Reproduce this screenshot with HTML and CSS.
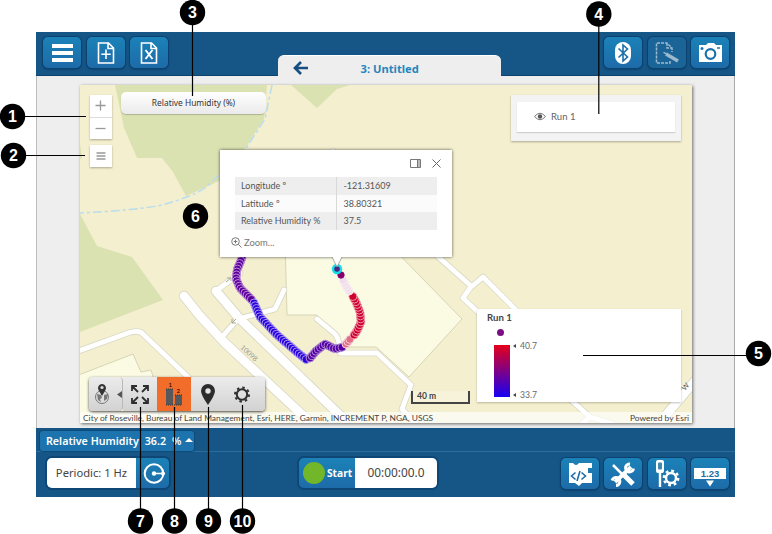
FILE: index.html
```html
<!DOCTYPE html>
<html lang="en">
<head>
    <meta charset="UTF-8">
    <meta name="viewport" content="width=device-width, initial-scale=1.0">
    <title>Map display</title>
    <link rel="stylesheet" href="styles.css">
</head>
<body>
    <div class="app">
        <header class="topbar">
            <div class="group">
                <button class="btn"><svg width="38" height="31" viewBox="0 0 38 31"><path d="M9 7h21v4H9zM9 14h21v4H9zM9 21h21v4H9z" fill="#fff"/></svg></button>
                <button class="btn"><svg width="38" height="31" viewBox="0 0 38 31" fill="none" stroke="#fff" stroke-width="1.6"><path d="M11.500 6h10l5 5v15h-15zM21 6v5.500h5.500M19 12.500v9.500M14.300 17.300h9.400"/></svg></button>
                <button class="btn"><svg width="38" height="31" viewBox="0 0 38 31" fill="none" stroke="#fff" stroke-width="1.6"><path d="M11.500 6h10l5 5v15h-15zM21 6v5.500h5.500"/><path d="M15.500 13l7 9M22.500 13l-7 9" stroke-width="1.900"/></svg></button>
            </div>
            <div class="tab">
                <svg class="back" width="16" height="14" viewBox="0 0 16 14" fill="none" stroke="#164f80" stroke-width="2.700"><path d="M2 7h13M8 1L2 7l6 6"/></svg>
                <span class="tab-title">3: Untitled</span>
            </div>
            <div class="group">
                <button class="btn"><svg width="38" height="31" viewBox="0 0 38 31"><rect x="11" y="5" width="16" height="22" rx="8" fill="#fff"/><path d="M14.500 11.500l9 8.500-4.500 4V8l4.500 4-9 8.500" fill="none" stroke="#1c6ea8" stroke-width="1.600"/></svg></button>
                <button class="btn off"><svg width="38" height="31" viewBox="0 0 38 31" fill="none" stroke="#9db9ce"><path d="M22 24v2H8.500V6H19l5 5v4M19 6v5h5" stroke-dasharray="3 1" stroke-width="1.500"/><path d="M18 17l12 7" stroke-width="3.500"/><path d="M15.500 15.300l3 1.500" stroke-width="1.500"/></svg></button>
                <button class="btn"><svg width="38" height="31" viewBox="0 0 38 31"><path d="M8 8h7l2-2h6l2 2h6v17H8z" fill="#fff"/><circle cx="19.500" cy="17" r="4.800" fill="#fff" stroke="#1c70aa" stroke-width="2.200"/><circle cx="11" cy="11.500" r="1.500" fill="#1c78b0"/><path d="M26 11h3" stroke="#1c78b0" stroke-width="1.500"/></svg></button>
            </div>
        </header>

        <main class="stage">
            <div class="map">
                <svg class="basemap" viewBox="80 85 612 338">
                    <rect x="80" y="85" width="612" height="338" fill="#f4efcf"/>
                    <g fill="#dae2b2">
                        <path d="M115 85H267L264 119L244 150L228 177L186 196L173 172L162 158H137L124 128z"/>
                        <path d="M291 85H350L337 89L317 108z"/>
                        <path d="M80 214L97 246L132 257L163 300L80 332zM80 144L82 158L80 159z"/>
                    </g>
                    <path d="M272 85L265 119L243 153L205 188Q192 197 158 206Q125 211 80 213" fill="none" stroke="#b9dcf0" stroke-width="1.500" stroke-dasharray="9 3 3 3"/>
                    <g fill="#fbfae3" stroke="#d6d5b8" stroke-width="1">
                        <path d="M285 240L287 315H317L340 340L340 347H376L409 377L462 319L385 240z"/>
                        <path d="M76 376L133 354L141 372L151 370L156 385L160 428H76z"/>
                    </g>
                    <g class="road-edge">
                        <path id="minor" d="M76 352L128 333Q140 329 144 335L190 379M221 338L238 319L275 309L284 290M240 273L216 291M317 319L334 333Q339 337 340 350M340 353H377L411 385L402 409L420 428M434 253L471 286M480 314L463 298L470 288L483 277L536 330M560 390L590 417L577 428M590 417L613 424M333 151L330 160"/>
                        <path id="major" d="M184 296L200 316L225 343L310 422M216 291L239 318L345 420M655 428L700 375"/>
                    </g>
                    <g class="road">
                        <use href="#minor"/>
                        <use href="#major"/>
                    </g>
                    <text x="240" y="348" class="block-no" transform="rotate(43 240 348)">10098</text>
                    <text x="685" y="391" class="street-name" transform="rotate(-50 685 391)">W</text>
                    <g stroke="#a5a58c" stroke-width="1" fill="none"><path d="M226 282l5-4m-4 0h4v3M236 319l-4 4m0-4v4h4"/></g>
                    <rect x="80" y="412" width="612" height="11" fill="#fff" opacity=".66"/>
                    <g id="track"></g>
                    <circle cx="337" cy="269" r="4" fill="#4b267e" stroke="#16dde9" stroke-width="2.400"/>
                </svg>

                <div class="zoom-box">
                    <button><svg width="22" height="22" viewBox="0 0 22 22"><path d="M5.500 10.500h10M10.500 5.500v10" stroke="#999" stroke-width="1.300"/></svg></button>
                    <button><svg width="22" height="22" viewBox="0 0 22 22"><path d="M5.500 10.500h10" stroke="#999" stroke-width="1.300"/></svg></button>
                </div>
                <button class="layers"><svg width="22" height="22" viewBox="0 0 22 22"><path d="M6.500 8h9M6.500 11h9M6.500 14h9" stroke="#999" stroke-width="1.300"/></svg></button>
                <div class="measure">Relative Humidity (%)</div>

                <div class="run-list">
                    <div class="run">
                        <svg width="12" height="9" viewBox="0 0 12 9"><path d="M.5 4.500Q6-2 11.500 4.500Q6 11 .5 4.500z" fill="none" stroke="#777"/><circle cx="6" cy="4.500" r="2.200" fill="#555"/></svg>
                        <span>Run 1</span>
                    </div>
                </div>

                <div class="popup">
                    <div class="popup-actions">
                        <svg width="11" height="9" viewBox="0 0 11 9" fill="none" stroke="#777"><path d="M.5.5h10v8H.5zM7.500.5v8M9 1v7"/></svg>
                        <svg width="9" height="9" viewBox="0 0 9 9" fill="none" stroke="#666"><path d="M.5.5l8 8M8.500.5l-8 8"/></svg>
                    </div>
                    <table class="fields">
                        <tr><th>Longitude &ordm;</th><td>-121.31609</td></tr>
                        <tr><th>Latitude &ordm;</th><td>38.80321</td></tr>
                        <tr><th>Relative Humidity %</th><td>37.5</td></tr>
                    </table>
                    <div class="zoom-to">
                        <svg width="11" height="11" viewBox="0 0 11 11" fill="none" stroke="#777"><circle cx="4.500" cy="4.500" r="3.800"/><path d="M7.300 7.300l3.200 3.200M2.700 4.500h3.600M4.500 2.700v3.600"/></svg>
                        <span>Zoom...</span>
                    </div>
                    <svg class="pointer" width="12" height="12" viewBox="0 0 12 12"><path d="M1 0L6 11L11 0z" fill="#fff"/><path d="M1 1L6 11L11 1" fill="none" stroke="#888" stroke-width=".7"/></svg>
                </div>

                <div class="legend">
                    <div class="legend-title">Run 1</div>
                    <div class="legend-dot"></div>
                    <div class="ramp">
                        <div class="ramp-bar"></div>
                        <div class="ramp-labels">
                            <span>40.7</span>
                            <span>33.7</span>
                        </div>
                    </div>
                </div>

                <div class="scale">40 m</div>

                <div class="tools">
                    <button class="tool first"><svg width="34" height="34" viewBox="0 0 34 34"><circle cx="13" cy="20" r="6.500" fill="#ddd" stroke="#777"/><path d="M8 17l4 1 1 3-2 1 1 3-3-2zM15 18l4-1-1 5-3 2z" fill="#777"/><path d="M13 19l-3.500-6a4 4 0 1 1 7 0z" fill="#333"/><circle cx="13" cy="10.500" r="1.600" fill="#ddd"/><path d="M33 14v7l-5-3.500z" fill="#555"/></svg></button>
                    <button class="tool"><svg width="34" height="34" viewBox="0 0 34 34" fill="none" stroke="#2e2e2e" stroke-width="1.800"><path d="M9 14V9h5M9 9l6 6M20 9h5v5M25 9l-6 6M9 21v5h5M9 26l6-6M20 26h5v-5M25 26l-6-6"/></svg></button>
                    <button class="tool on"><svg width="34" height="34" viewBox="0 0 34 34"><path d="M9 12h7v16H9zM18 18h7v10h-7z" fill="#57585c"/><path d="M9 12h7M18 18h7M9 28h16" stroke="#333" stroke-dasharray="1 1"/><text x="11.500" y="10" font-size="6">1</text><text x="19.500" y="16" font-size="6">2</text></svg></button>
                    <button class="tool"><svg width="34" height="34" viewBox="0 0 34 34"><path d="M17 28Q10 18 10 14a7 7 0 0 1 14 0Q24 18 17 28z" fill="#2c2c2c"/><circle cx="17" cy="14" r="2.700" fill="#e4e4e4"/></svg></button>
                    <button class="tool last"><svg width="34" height="34" viewBox="0 0 34 34" fill="none" stroke="#2e2e2e"><circle cx="17" cy="17.500" r="5.200" stroke-width="2"/><circle cx="17" cy="17.500" r="7" stroke-width="2" stroke-dasharray="2.500 3"/></svg></button>
                </div>

                <div class="credits">
                    <span class="sources">City of Roseville, Bureau of Land Management, Esri, HERE, Garmin, INCREMENT P, NGA, USGS</span>
                    <span class="powered">Powered by Esri</span>
                </div>
            </div>
        </main>

        <footer class="bottombar">
            <div class="readouts">
                <div class="readout"><span>Relative Humidity</span><span>36.2</span><span>%</span><i></i></div>
            </div>
            <div class="controls">
                <div class="rate">
                    <span>Periodic: 1 Hz</span>
                    <svg width="32" height="30" viewBox="0 0 32 30"><circle cx="18" cy="15.500" r="9.300" fill="none" stroke="#fff" stroke-width="2"/><path d="M18 15.500h9" stroke="#fff" stroke-width="1.500"/><circle cx="18" cy="15.500" r="2.200" fill="#fff"/><circle cx="27" cy="15.500" r="2" fill="#fff"/></svg>
                </div>
                <div class="record">
                    <div class="start"><i></i><span>Start</span></div>
                    <div class="clock">00:00:00.0</div>
                </div>
                <div class="group">
                    <button class="btn"><svg width="38" height="31" viewBox="0 0 38 31"><path d="M8 5h4q3 4 6 0h13v5h-4v5h4v10H21l-3 3-4-3H8z" fill="#fff"/><path d="M14.500 14.500l-4 3.500 4 3.500M20.500 14.500l4 3.500-4 3.500M19 13l-3 10" fill="none" stroke="#1c6ea8" stroke-width="1.600"/></svg></button>
                    <button class="btn"><svg width="38" height="31" viewBox="0 0 38 31" fill="none" stroke="#fff"><path d="M9 7l10 10" stroke-width="2.500"/><path d="M20 17l9 9" stroke-width="5"/><path d="M27 9L11 24" stroke-width="4"/><path d="M29.500 10.500a4 4 0 1 1-3.500-4.500M8 22.500a4 4 0 1 1 4 5" stroke-width="3"/></svg></button>
                    <button class="btn"><svg width="38" height="31" viewBox="0 0 38 31"><rect x="8" y="2" width="8" height="13" rx="2" fill="#fff"/><rect x="10" y="4.500" width="4" height="7" rx="1" fill="#4388ae"/><path d="M12 14v15" stroke="#fff" stroke-width="2.400"/><circle cx="23" cy="20" r="5" fill="none" stroke="#fff" stroke-width="2.500"/><circle cx="23" cy="20" r="7.200" fill="none" stroke="#fff" stroke-width="2.400" stroke-dasharray="2.800 2.850"/></svg></button>
                    <button class="btn"><svg width="38" height="31" viewBox="0 0 38 31"><path d="M3 10h32v11H3zM15 22.500h8l-4 6z" fill="#fff"/><text x="19" y="19" class="digits">1.23</text></svg></button>
                </div>
            </div>
        </footer>
    </div>

    <svg class="callouts" viewBox="0 0 772 534" id="callouts"></svg>
    <script src="script.js"></script>
</body>
</html>
```

FILE: styles.css
```css
*{
    margin: 0;
    padding: 0;
    box-sizing: border-box;
}
body{
    position: relative;
    width: 772px;
    height: 534px;
    padding: 32px 36px 0;
    overflow: hidden;
    background: #fff;
    font-family: "Noto Sans", sans-serif;
    color: #444;
}
svg{
    display: block;
}
button{
    border: 0;
    font-family: inherit;
}
.app{
    width: 699px;
    height: 465px;
    display: flex;
    flex-direction: column;
    background: #eeeeee;
}
/* header */
.topbar{
    height: 44px;
    display: flex;
    justify-content: space-between;
    padding: 5px 6px 0 7px;
    background: #165687;
    border-bottom: 1px solid #0d426f;
}
.group{
    display: flex;
    gap: 5.5px;
}
.btn{
    width: 38px;
    height: 31px;
    border-radius: 5px;
    background: linear-gradient(#1b82b8, #1d6ba9);
    box-shadow: 0 0 0 1px #0c426f, 0 1px 2px 1px #0e4471;
}
.btn.off{
    background: #1b6498;
}
.digits{
    font: bold 9.5px "Liberation Sans", sans-serif;
    fill: #1b6ba5;
    text-anchor: middle;
}
.tab{
    height: 30px;
    width: 223px;
    margin: 18px 0 0 6px;
    padding-left: 15px;
    display: flex;
    align-items: center;
    background: #eeeeee;
    border-top: 1px solid #fff;
    border-radius: 6px 6px 0 0;
}
.back{
    margin-top: -5px;
}
.tab-title{
    margin: -5px 0 0 52px;
    font-size: 11.2px;
    font-weight: bold;
    color: #2586bd;
}
/* map */
.stage{
    height: 352px;
    padding: 9px 42px 5px 43px;
    border-left: 1px solid #bdbdbd;
    border-right: 1px solid #aaa;
}
.map{
    position: relative;
    height: 338px;
    box-shadow: 1px 1px 3px rgba(0,0,0,.55);
    font-family: Lato, sans-serif;
}
.basemap{
    position: absolute;
    width: 612px;
    height: 338px;
}
.road-edge{
    fill: none;
    stroke: #dadac6;
    stroke-linecap: round;
    stroke-linejoin: round;
}
.road{
    fill: none;
    stroke: #fff;
    stroke-linecap: round;
    stroke-linejoin: round;
}
.road-edge #minor{
    stroke-width: 6.5px;
}
.road-edge #major{
    stroke-width: 10.5px;
}
.block-no{
    font-size: 7px;
    fill: #999;
}
.street-name{
    font-size: 7px;
    fill: #555;
}
.zoom-box{
    position: absolute;
    left: 10px;
    top: 10px;
    width: 22px;
    background: #fff;
    box-shadow: 0 1px 2px rgba(0,0,0,.3);
}
.zoom-box button,
.layers{
    display: block;
    width: 22px;
    height: 22px;
    background: #fff;
}
.zoom-box button + button{
    border-top: 1px solid #ddd;
}
.layers{
    position: absolute;
    left: 10px;
    top: 60px;
    box-shadow: 0 1px 2px rgba(0,0,0,.3);
}
.measure{
    position: absolute;
    left: 41px;
    top: 7px;
    width: 145px;
    height: 22px;
    border-radius: 5px;
    background: linear-gradient(#fff, #eaeaea);
    box-shadow: 0 1px 1px rgba(0,0,0,.2);
    font: 8.4px/22px "Noto Sans", sans-serif;
    text-align: center;
    color: #333;
}
.run-list{
    position: absolute;
    left: 431px;
    top: 10px;
    width: 170px;
    height: 46px;
    padding: 7px 6px;
    background: #f3f3f3;
    box-shadow: 0 1px 2px rgba(0,0,0,.3);
}
.run{
    height: 30px;
    display: flex;
    align-items: center;
    gap: 5px;
    padding: 0 0 2px 17px;
    background: #fff;
    box-shadow: 0 1px 1px rgba(0,0,0,.15);
    font-size: 9.6px;
    color: #666;
}
.popup{
    position: absolute;
    left: 140px;
    top: 65px;
    width: 232px;
    height: 107px;
    padding: 9px 15px 0;
    background: #fff;
    box-shadow: 0 0 3px rgba(0,0,0,.65);
    font-size: 9px;
    color: #555;
}
.popup-actions{
    display: flex;
    justify-content: flex-end;
    gap: 11px;
    margin: 0 -4px 9px 0;
}
.fields{
    width: 202px;
    border-collapse: collapse;
}
.fields tr{
    height: 17.6px;
    background: #fbfbfb;
}
.fields tr:nth-child(odd){
    background: #eeeeee;
}
.fields th{
    width: 101px;
    padding-left: 6px;
    border-right: 1px solid #d8d8d8;
    text-align: left;
    font-weight: normal;
}
.fields td{
    padding-left: 7px;
}
.zoom-to{
    display: flex;
    align-items: center;
    gap: 2px;
    margin: 7px 0 0 -4px;
    font-size: 9.4px;
    color: #777;
}
.pointer{
    position: absolute;
    left: 111px;
    top: 106px;
}
.legend{
    position: absolute;
    left: 397px;
    top: 224px;
    width: 204px;
    height: 93px;
    padding: 3px 10px;
    background: #fff;
    box-shadow: 0 1px 2px rgba(0,0,0,.25);
}
.legend-title{
    font-size: 9.6px;
    line-height: 12px;
    font-weight: bold;
}
.legend-dot{
    width: 7px;
    height: 7px;
    margin: 5px 0 9px 10px;
    border-radius: 50%;
    background: #7a0f85;
}
.ramp{
    display: flex;
    gap: 4px;
    margin-left: 7px;
}
.ramp-bar{
    width: 16px;
    height: 52px;
    background: linear-gradient(#e50018, #1800f5);
}
.ramp-labels{
    display: flex;
    flex-direction: column;
    justify-content: space-between;
    margin: -4px 0 -3px;
    font-size: 8.6px;
    color: #666;
}
.ramp-labels span::before{
    content: "";
    display: inline-block;
    margin: 0 4px 1px -1px;
    border: 2px solid transparent;
    border-left-width: 0;
    border-right: 3px solid #444;
}
.scale{
    position: absolute;
    left: 331px;
    top: 306px;
    width: 59px;
    height: 13px;
    padding-left: 4px;
    border: 2px solid #444;
    border-top: 0;
    background: rgba(255,255,255,.25);
    font: bold 8.5px/10px Lato, sans-serif;
}
.tools{
    position: absolute;
    left: 9px;
    top: 292px;
    display: flex;
    border-radius: 4px;
    box-shadow: 0 1px 3px rgba(0,0,0,.7);
}
.tool{
    width: 34px;
    height: 34px;
    background: linear-gradient(#ececec, #d2d2d2);
}
.tool.first{
    border-radius: 4px;
    border-right: 1px solid #b8b8b8;
}
.tool.on{
    background: #f26c2a;
}
.tool.last{
    width: 40px;
    border-radius: 0 4px 4px 0;
}
.credits{
    position: absolute;
    left: 3px;
    right: 3px;
    bottom: 0;
    display: flex;
    justify-content: space-between;
    font-size: 8.42px;
    line-height: 10px;
}
/* footer */
.bottombar{
    height: 69px;
    background: #165687;
    color: #fff;
}
.readouts{
    height: 24px;
    padding: 3px 4px;
    border-bottom: 1px solid #2b6d9c;
}
.readout{
    width: 154px;
    height: 20px;
    display: flex;
    align-items: center;
    gap: 6px;
    padding: 0 0 1px 6px;
    border-radius: 3px;
    background: #1d73ad;
    box-shadow: 0 0 0 1px #0f4a79;
    font-size: 10.7px;
    font-weight: 600;
    white-space: nowrap;
}
.readout i{
    border: 4px solid transparent;
    border-top: 0;
    border-bottom: 4px solid #fff;
    margin: -2px 0 0 -2px;
}
.controls{
    display: flex;
    padding: 6px 6px 0 11px;
}
.controls .group{
    margin-left: auto;
}
.rate,
.record{
    height: 30px;
    display: flex;
    border-radius: 5px;
    overflow: hidden;
    background: linear-gradient(#1b82b8, #1d6ba9);
    box-shadow: 0 0 0 2px #0e4776;
    font-size: 11.2px;
    line-height: 29px;
}
.rate{
    width: 122px;
}
.rate span{
    width: 89px;
    background: #fff;
    color: #444;
    text-align: center;
}
.record{
    width: 138px;
    margin-left: 130px;
}
.start{
    display: flex;
    align-items: center;
    gap: 2px;
    width: 56px;
    padding-left: 4px;
    font-size: 10.2px;
    font-weight: bold;
}
.start i{
    flex: none;
    width: 22px;
    height: 22px;
    border-radius: 50%;
    background: #72b629;
}
.clock{
    width: 82px;
    background: #fff;
    color: #444;
    text-align: center;
    font-size: 11.9px;
}
/* numbered callouts */
.callouts{
    position: absolute;
    left: 0;
    top: 0;
    width: 772px;
    height: 534px;
    font: bold 16px "Liberation Sans", sans-serif;
}
```

FILE: script.js
```javascript
const ns = "http://www.w3.org/2000/svg";

function add(parent, tag, attrs, text) {
    const el = document.createElementNS(ns, tag);
    for (const k in attrs) el.setAttribute(k, attrs[k]);
    if (text) el.textContent = text;
    parent.appendChild(el);
    return el;
}

// roads share their geometry with the edge group, only the width differs
document.querySelectorAll(".road use").forEach(function (u) {
    const src = document.querySelector(u.getAttribute("href"));
    const width = src.id == "major" ? 8.6 : 4.8;
    add(u.parentNode, "path", { d: src.getAttribute("d"), "stroke-width": width });
    u.remove();
});

// track segments: colour, outline, points
const segments = [
    ["#5c009c", "#c79bdc", [[242,258],[237,270],[236,279],[240,288],[253,301]]],
    ["#2b00dd", "#b4abf2", [[254,303],[260,317],[277,335],[298,353],[308,361]]],
    ["#5400a4", "#b896d8", [[310,358],[316,351],[325,344],[335,349],[343,347]]],
    ["#e46a85", "#f7dbe2", [[346,344],[351,338]]],
    ["#d0002e", "#f3a8b8", [[354,335],[357,331],[361,322],[360,312],[356,302],[352,295]]],
    ["#f1dced", "#fbf2ee", [[349,291],[346,286],[343,280]]],
    ["#85006c", "#85006c", [[341,275]]]
];
const track = document.getElementById("track");
segments.forEach(function (s) {
    const p = document.createElementNS(ns, "path");
    p.setAttribute("d", "M" + s[2].map(q => q.join(" ")).join("L"));
    const len = s[2].length > 1 ? p.getTotalLength() : 0;
    for (let d = 0; d <= len; d += 3) {
        const c = len ? p.getPointAtLength(d) : { x: s[2][0][0], y: s[2][0][1] };
        add(track, "circle", { cx: c.x, cy: c.y, r: len ? 4 : 3.2, fill: s[0], stroke: s[1], "stroke-width": 0.9 });
    }
});

// number, centre, end of the leader line
const callouts = [
    [1, 12.5, 116.5, 86, 116.5],
    [2, 13.5, 155.5, 85, 155.5],
    [3, 192.5, 12.5, 192.5, 96],
    [4, 598.8, 14, 598.8, 114],
    [5, 758.5, 353.5, 583, 355.5],
    [6, 195.5, 216, 195.5, 216],
    [7, 140.5, 521, 140.5, 407],
    [8, 174.5, 521, 174.5, 407],
    [9, 208.5, 521, 208.5, 407],
    [10, 242.5, 521, 242.5, 405]
];
const box = document.getElementById("callouts");
callouts.forEach(function (c) {
    const y = c[0] == 5 ? c[4] : c[2];
    add(box, "line", { x1: c[1], y1: y, x2: c[3], y2: c[4], stroke: "#000", "stroke-width": 1.2 });
    add(box, "circle", { cx: c[1], cy: c[2], r: 12.7, fill: "#000" });
    add(box, "text", { x: c[1], y: c[2] + 5.7, fill: "#fff", "text-anchor": "middle" }, c[0]);
});
```
